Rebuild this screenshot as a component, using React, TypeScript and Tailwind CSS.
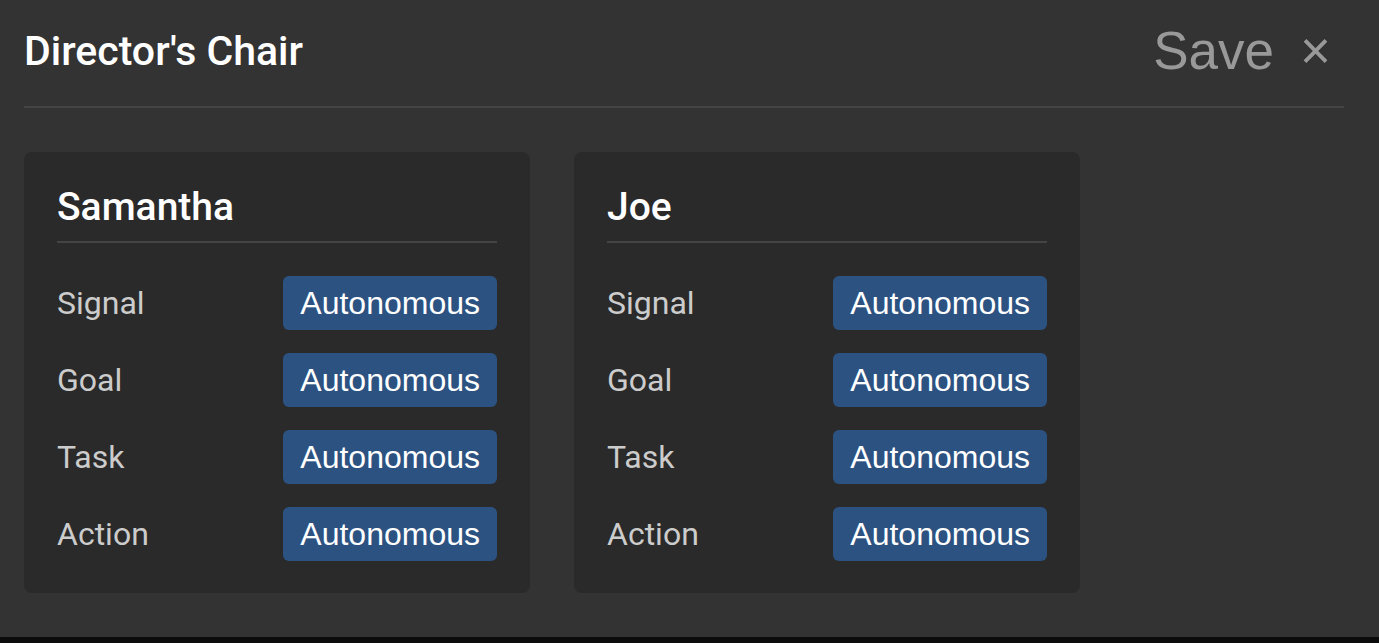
const MODES = ["Signal", "Goal", "Task", "Action"];
const CHARACTERS = ["Samantha", "Joe"];

function CharacterCard({ name }: { name: string }) {
  return (
    <section className="w-[506px] rounded-lg bg-[#2a2a2a] px-[33px] pt-[33px] pb-8">
      <h2 className="border-b-2 border-[#444] pb-3 text-[39px] leading-[44px] font-medium text-white">{name}</h2>
      <ul className="mt-[33px] flex flex-col gap-[23px]">
        {MODES.map((mode) => (
          <li key={mode} className="flex items-center justify-between">
            <span className="text-[32px] leading-[38px] text-[#ccc]">{mode}</span>
            <button
              type="button"
              aria-label={`${name} ${mode}: Autonomous`}
              className="h-[54px] rounded-md bg-[#2c5282] px-[17px] font-['Liberation_Sans',Arial,sans-serif] text-[32px] leading-[37px] text-white"
            >
              Autonomous
            </button>
          </li>
        ))}
      </ul>
    </section>
  );
}

export default function App() {
  return (
    <div className="min-h-screen bg-[#0c0c0c] font-[Roboto,sans-serif]">
      <main className="bg-[#333] px-6 pt-5 pb-11">
        <header className="mr-[11px] flex items-center justify-between border-b-2 border-[#444] pb-6">
          <h1 className="text-[41px] leading-[52px] font-medium text-white">Director's Chair</h1>
          <div className="flex items-center gap-[26px] pr-[13px] font-['Liberation_Sans',Arial,sans-serif] text-[53px] leading-[62px] text-[#999]">
            <button type="button">Save</button>
            <button type="button" aria-label="Close">×</button>
          </div>
        </header>
        <div className="mt-11 flex flex-wrap gap-11">
          {CHARACTERS.map((name) => (
            <CharacterCard key={name} name={name} />
          ))}
        </div>
      </main>
    </div>
  );
}
